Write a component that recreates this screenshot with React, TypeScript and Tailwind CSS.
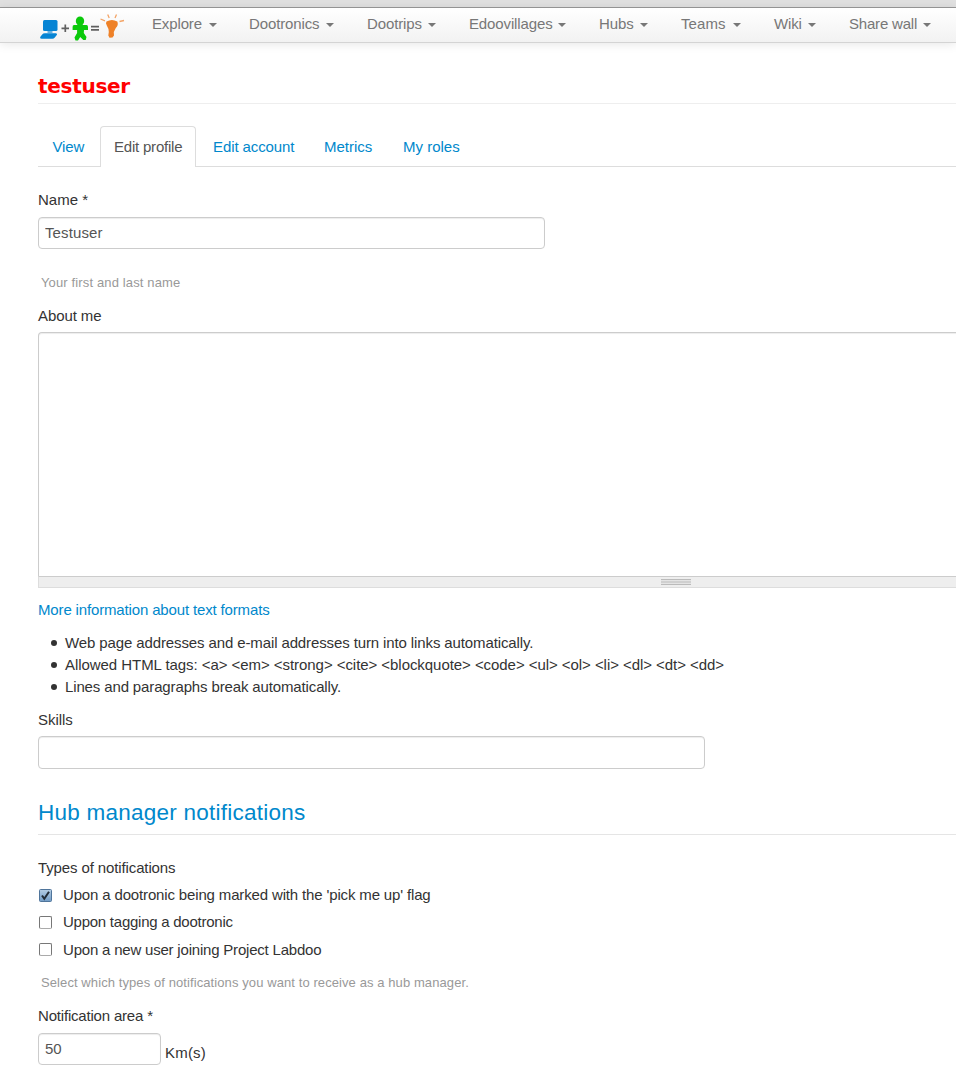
import React from "react";

const menu = [
  { label: "Explore", item: "w-[97px]", text: "w-[57px]" },
  { label: "Dootronics", item: "w-[118px]", text: "w-[77px]" },
  { label: "Dootrips", item: "w-[102px]", text: "w-[61px]" },
  { label: "Edoovillages", item: "w-[130px]", text: "w-[89px]" },
  { label: "Hubs", item: "w-[82px]", text: "w-[41px]" },
  { label: "Teams", item: "w-[93px]", text: "w-[52px] tracking-[0.1px]" },
  { label: "Wiki", item: "w-[75px]", text: "w-[34px]" },
  { label: "Share wall", item: "w-[107px]", text: "w-[74px] tracking-[-0.2px]" },
];

const rules = [
  { text: "Web page addresses and e-mail addresses turn into links automatically.", track: "tracking-[-0.115px]" },
  { text: "Allowed HTML tags: <a> <em> <strong> <cite> <blockquote> <code> <ul> <ol> <li> <dl> <dt> <dd>", track: "tracking-[-0.055px]" },
  { text: "Lines and paragraphs break automatically.", track: "tracking-[-0.135px]" },
];

function Logo() {
  return (
    <svg className="mt-[5px] h-[30px] w-[88px] shrink-0" viewBox="0 0 88 30">
      <g fill="#0684d4">
        <rect x="5" y="7" width="14.500" height="11" rx="1.500" />
        <path d="M9.500 18h5v2h-5z" opacity=".6" />
        <path d="M7 20.200h11q1.800.3.800 1.900l-2 2.500q-1 1.200-2.500 1.200H3.500q-2-.2-1.300-1.700l2-2.500q.8-1.400 2.800-1.400z" />
      </g>
      <path d="M23.500 15.300h7.500M27.300 11.500V19M53 13.700h8M53 16.800h8" stroke="#606060" strokeWidth="1.700" />
      <g fill="#0bc90b">
        <ellipse cx="42" cy="8" rx="4.200" ry="4.600" />
        <path d="M36 12h12.500q1.500 0 1.500 2v3h-4l-.2 3 2.700 4-.8 3h-2.400L42.200 24l-2.200 3.500h-2.500l-1-3 2.600-4.500V17h-4.500v-3q0-2 1.400-2z" />
      </g>
      <g fill="#ee8128">
        <path d="M68.500 8.500Q74 5.500 79.300 8.500q1.500 3.500-1.500 6.500l-2 4 .2 3.500-1.500 2-3 .2-1.200-2.200.5-3.500q0-3.500-2-6.500-1.500-2.500-.3-4z" />
        <path d="M69.700 1.500l1.500 3.500M78.500 1.500L77 5M62.500 6l4.500 1.800M81.500 8.500l4.500-1" stroke="#f3a467" strokeWidth="1.300" fill="none" />
      </g>
    </svg>
  );
}

function Navbar() {
  return (
    <header className="shrink-0">
      <div className="h-2 border-b border-[#999] bg-[#e0e0e0]" />
      <nav className="flex h-[35px] border-b border-[#d4d4d4] bg-linear-to-b from-white to-[#f2f2f2] pl-[38px] shadow-[0_1px_10px_rgba(0,0,0,0.1)]">
        <Logo />
        <div className="ml-[26px] flex shrink-0 tracking-[-0.13px] text-[#777]">
          {menu.map((m) => (
            <div key={m.label} className={`${m.item} flex h-8 shrink-0 items-center`}>
              <span className={m.text}>{m.label}</span>
              <span className="mt-[1px] border-x-4 border-t-4 border-x-transparent border-t-[#777]" />
            </div>
          ))}
        </div>
      </nav>
    </header>
  );
}

function Tabs() {
  return (
    <div className="mt-[22px] flex h-[41px] border-b border-[#ddd] text-[#0088cc]">
      <a className="w-[62px] pt-[10px] pl-[14.500px] tracking-[-0.15px]">View</a>
      <a className="h-[41px] w-[96px] rounded-t-[4px] border border-b-0 border-[#ddd] bg-white pt-[9px] pl-[13px] tracking-[-0.21px] text-[#555]">Edit profile</a>
      <a className="w-[111px] pt-[10px] pl-[17px] tracking-[-0.1px]">Edit account</a>
      <a className="w-[79px] pt-[10px] pl-[17px]">Metrics</a>
      <a className="pt-[10px] pl-[17px]">My roles</a>
    </div>
  );
}

type CheckProps = { on?: boolean; label: string; text: string };

function Check({ on = false, label, text }: CheckProps) {
  return (
    <label className="flex h-[27px] items-start">
      {on ? (
        <svg className="mt-[7px] ml-[1px] h-[13px] w-[13px]" viewBox="0 0 13 13">
          <defs>
            <linearGradient id="face" x1="0" y1="0" x2="0" y2="1">
              <stop offset="0" stopColor="#b5cde3" />
              <stop offset="1" stopColor="#719bc5" />
            </linearGradient>
          </defs>
          <rect x=".5" y=".5" width="12" height="12" rx="1" fill="url(#face)" stroke="#50759b" />
          <path d="M3 6.500l2.300 3.300L10 2.800" fill="none" stroke="#222b35" strokeWidth="2" />
        </svg>
      ) : (
        <span className="mt-[7px] ml-[1px] h-[13px] w-[13px] rounded-[2px] border border-[#777] border-b-[#aaa] bg-white" />
      )}
      <span className={`ml-[11px] ${text}`}>{label}</span>
    </label>
  );
}

const field =
  "block rounded-[4px] border border-[#ccc] bg-white px-[6px] text-[#555] shadow-[inset_0_1px_1px_rgba(0,0,0,0.075)] outline-none";

export default function App() {
  return (
    <div className="flex h-[1070px] w-[956px] flex-col overflow-hidden bg-white font-['Liberation_Sans',Arial,sans-serif] text-[15px] leading-[22px] whitespace-nowrap text-[#333]">
      <Navbar />
      <main className="pl-[38px]">
        <h1 className="mt-[28px] h-[33px] border-b border-[#eee] font-['DejaVu_Sans',sans-serif] text-[20px] leading-[30px] font-bold tracking-[-0.28px] text-[#f00]">testuser</h1>
        <Tabs />
        <div className="mt-[22px] h-[28px]">Name *</div>
        <input className={`${field} h-[32px] w-[507px] pb-[2px] tracking-[0.12px]`} defaultValue="Testuser" />
        <p className="mt-[23px] pl-[3px] text-[13px] tracking-[0.14px] text-[#999]">Your first and last name</p>
        <div className="mt-[11px] h-[27px] tracking-[-0.1px]">About me</div>
        <textarea className={`${field} h-[244px] w-[1300px] resize-none rounded-b-none border-b-0`} />
        <div className="flex h-[12px] w-[1300px] border border-[#ddd] border-t-[#ccc] bg-[#eee] pt-[2px] pl-[622px]">
          <div className="h-[6px] w-[30px] border-y border-[#bbb] bg-[#d0d0d0] shadow-[inset_0_1px_0_#e4e4e4,inset_0_-1px_0_#e4e4e4]" />
        </div>
        <a className="mt-[11px] block tracking-[-0.15px] text-[#0088cc]">More information about text formats</a>
        <ul className="mt-[11px]">
          {rules.map((r) => (
            <li key={r.text} className={`flex items-center pl-[13px] ${r.track}`}>
              <span className="mr-[8px] h-[6px] w-[6px] rounded-full bg-[#333]" />
              {r.text}
            </li>
          ))}
        </ul>
        <div className="mt-[11px] h-[27px] tracking-[-0.05px]">Skills</div>
        <input className={`${field} h-[33px] w-[667px]`} />
        <h2 className="mt-[22px] h-[44px] border-b border-[#e5e5e5] text-[22.500px] leading-[44px] tracking-[0.24px] text-[#0088cc]">Hub manager notifications</h2>
        <div className="mt-[22px] h-[25px] tracking-[-0.12px]">Types of notifications</div>
        <Check on label="Upon a dootronic being marked with the 'pick me up' flag" text="mt-[2px] tracking-[-0.15px]" />
        <Check label="Uppon tagging a dootronic" text="mt-[2px] tracking-[-0.25px]" />
        <Check label="Upon a new user joining Project Labdoo" text="mt-[3px] tracking-[-0.2px]" />
        <p className="mt-[9px] h-[22px] pl-[3px] text-[13px] tracking-[0.09px] text-[#999]">Select which types of notifications you want to receive as a hub manager.</p>
        <div className="mt-[11px] h-[28px] tracking-[-0.19px]">Notification area *</div>
        <div className="flex">
          <input className={`${field} h-[32px] w-[123px] pb-[2px]`} defaultValue="50" />
          <span className="mt-[9px] ml-[4px] tracking-[0.2px]">Km(s)</span>
        </div>
      </main>
    </div>
  );
}
